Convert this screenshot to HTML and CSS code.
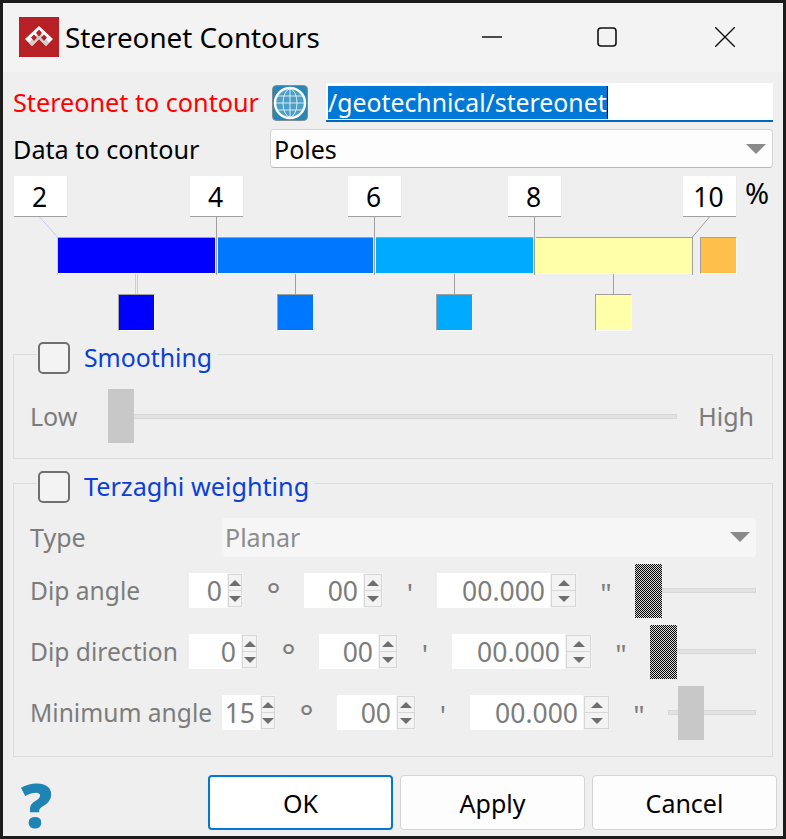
FILE: index.html
```html
<!DOCTYPE html>
<html lang="en">
<head>
    <meta charset="UTF-8">
    <meta name="viewport" content="width=device-width, initial-scale=1.0">
    <title>Stereonet Contours</title>
    <link rel="stylesheet" href="styles.css">
</head>
<body>

    <div class="dialog">
        <div class="titlebar">
            <svg class="app-icon" viewBox="0 0 40 40">
                <rect width="40" height="40" fill="#b72025"/>
                <path d="M20 9 L34 22 L27 29 L20 22 L13 29 L6 22 Z" fill="#fff"/>
                <path d="M10 25.5 L13 29 L20 22 L27 29 L30 25.5 L27 22.5 L20 16 L13 22.5 Z" fill="#cfcfcf"/>
                <path d="M20 12.5 L23 16 L20 19.5 L17 16 Z M15 17.5 L18 20.5 L15 24 L12 20.5 Z M25 17.5 L28 20.5 L25 24 L22 20.5 Z" fill="#b72025"/>
            </svg>
            <div class="title">Stereonet Contours</div>
            <svg class="win-btn win-min" viewBox="0 0 20 20"><path d="M0 10 H20" stroke="#111" stroke-width="1.5"/></svg>
            <svg class="win-btn win-max" viewBox="0 0 20 20"><rect x="1" y="1" width="18" height="18" rx="3" fill="none" stroke="#111" stroke-width="1.6"/></svg>
            <svg class="win-btn win-close" viewBox="0 0 20 20"><path d="M0 0 L20 20 M20 0 L0 20" stroke="#111" stroke-width="1.4"/></svg>
        </div>

        <div class="content">
            <div class="form-row first-row">
                <div class="row-label required">Stereonet to contour</div>
                <svg class="globe" viewBox="0 0 36 36">
                    <rect x="0.5" y="0.5" width="35" height="35" rx="4" fill="#2a86b4" stroke="#7f8c93"/>
                    <circle cx="18" cy="18" r="15" fill="#4d9fc7" stroke="#fff" stroke-width="2.4"/>
                    <g fill="none" stroke="#d6ecf5" stroke-width="1">
                        <ellipse cx="18" cy="18" rx="7" ry="14"/>
                        <path d="M18 4 V32 M4 18 H32 M6 11 H30 M6 25 H30"/>
                    </g>
                </svg>
                <div class="path-input"><span class="selected">/geotechnical/stereonet</span></div>
            </div>

            <div class="form-row second-row">
                <div class="row-label data-label">Data to contour</div>
                <div class="combo">
                    <span>Poles</span>
                    <span class="combo-arrow"></span>
                </div>
            </div>

            <div class="scale">
                <svg class="scale-lines" viewBox="0 0 786 200" width="786" height="200">
                    <g fill="none" stroke="#c8c8ff" stroke-width="1">
                        <path d="M39.5 47 L57.5 67 V105"/>
                        <path d="M135.5 104 V124 M137.5 104 V124"/>
                    </g>
                    <g fill="none" stroke="#a0a0a0" stroke-width="1">
                        <path d="M216.5 47 V105 M374.5 47 V105 M534.5 47 V105"/>
                        <path d="M709.5 47 L692.5 67 V105"/>
                        <path d="M295.5 104 V124 M454.5 104 V124 M613.5 104 V124"/>
                    </g>
                </svg>
                <div class="handles">
                    <div class="handle">2</div>
                    <div class="handle gap-a">4</div>
                    <div class="handle gap-b">6</div>
                    <div class="handle gap-c">8</div>
                    <div class="handle gap-d">10</div>
                    <div class="percent">%</div>
                </div>
                <div class="bar">
                    <div class="seg seg-1"></div>
                    <div class="seg seg-2"></div>
                    <div class="seg seg-3"></div>
                    <div class="seg seg-4"></div>
                    <div class="seg seg-5"></div>
                </div>
                <div class="swatches">
                    <div class="seg swatch sw-1"></div>
                    <div class="seg swatch sw-2"></div>
                    <div class="seg swatch sw-3"></div>
                    <div class="seg swatch sw-4"></div>
                </div>
            </div>

            <div class="group smoothing">
                <div class="group-title">
                    <span class="checkbox"></span>
                    <span class="group-name name-short">Smoothing</span>
                </div>
                <div class="smooth-row">
                    <span class="muted low">Low</span>
                    <div class="slider smooth-slider">
                        <div class="thumb thumb-plain thumb-start"></div>
                    </div>
                    <span class="muted high">High</span>
                </div>
            </div>

            <div class="group terzaghi">
                <div class="group-title">
                    <span class="checkbox"></span>
                    <span class="group-name">Terzaghi weighting</span>
                </div>
                <div class="type-row">
                    <span class="muted type-label">Type</span>
                    <div class="combo combo-off">
                        <span>Planar</span>
                        <span class="combo-arrow"></span>
                    </div>
                </div>

                <div class="angle-row">
                    <span class="muted angle-label">Dip angle</span>
                    <div class="spin spin-deg"><div class="spin-value">0</div><div class="spin-btns"><i class="up"></i><i class="down"></i></div></div>
                    <span class="muted unit unit-deg">°</span>
                    <div class="spin spin-min"><div class="spin-value">00</div><div class="spin-btns"><i class="up"></i><i class="down"></i></div></div>
                    <span class="muted unit unit-min">'</span>
                    <div class="spin spin-sec"><div class="spin-value">00.000</div><div class="spin-btns"><i class="up"></i><i class="down"></i></div></div>
                    <span class="muted unit unit-sec">"</span>
                    <div class="slider angle-slider"><div class="thumb thumb-dither thumb-start"></div></div>
                </div>

                <div class="angle-row">
                    <span class="muted angle-label">Dip direction</span>
                    <div class="spin spin-deg spin-wide"><div class="spin-value">0</div><div class="spin-btns"><i class="up"></i><i class="down"></i></div></div>
                    <span class="muted unit unit-deg">°</span>
                    <div class="spin spin-min"><div class="spin-value">00</div><div class="spin-btns"><i class="up"></i><i class="down"></i></div></div>
                    <span class="muted unit unit-min">'</span>
                    <div class="spin spin-sec"><div class="spin-value">00.000</div><div class="spin-btns"><i class="up"></i><i class="down"></i></div></div>
                    <span class="muted unit unit-sec">"</span>
                    <div class="slider angle-slider"><div class="thumb thumb-dither thumb-start"></div></div>
                </div>

                <div class="angle-row">
                    <span class="muted angle-label label-long">Minimum angle</span>
                    <div class="spin spin-deg"><div class="spin-value">15</div><div class="spin-btns"><i class="up"></i><i class="down"></i></div></div>
                    <span class="muted unit unit-deg">°</span>
                    <div class="spin spin-min"><div class="spin-value">00</div><div class="spin-btns"><i class="up"></i><i class="down"></i></div></div>
                    <span class="muted unit unit-min">'</span>
                    <div class="spin spin-sec"><div class="spin-value">00.000</div><div class="spin-btns"><i class="up"></i><i class="down"></i></div></div>
                    <span class="muted unit unit-sec">"</span>
                    <div class="slider angle-slider"><div class="thumb thumb-plain thumb-mid"></div></div>
                </div>
            </div>

            <div class="footer">
                <div class="help">?</div>
                <button class="btn btn-default" type="button">OK</button>
                <button class="btn" type="button">Apply</button>
                <button class="btn" type="button">Cancel</button>
            </div>
        </div>
    </div>

</body>
</html>
```

FILE: styles.css
```css
* {
    box-sizing: border-box;
}
html, body {
    margin: 0;
    padding: 0;
}
body {
    font-family: "Noto Sans", "Open Sans", sans-serif;
    font-size: 25px;
    color: #000;
    background-color: #efefef;
}
.dialog {
    width: 786px;
    height: 839px;
    border: 3px solid #1c1c1c;
    background-color: #efefef;
    display: flex;
    flex-direction: column;
    overflow: hidden;
}

/* title bar */
.titlebar {
    height: 69px;
    flex: none;
    background-color: #f3f3f3;
    display: flex;
    align-items: center;
    padding-left: 16px;
    padding-bottom: 2px;
}
.app-icon {
    width: 40px;
    height: 40px;
    flex: none;
}
.title {
    margin-left: 6px;
    font-size: 27.8px;
    width: 417px;
    white-space: nowrap;
}
.win-btn {
    width: 20px;
    height: 20px;
    flex: none;
}
.win-max {
    margin-left: 95px;
}
.win-close {
    margin-left: 98px;
}

/* top rows */
.content {
    flex: 1;
    display: flex;
    flex-direction: column;
    padding: 11px 10px 0;
    min-height: 0;
}
.form-row {
    display: flex;
    align-items: center;
}
.first-row {
    height: 39px;
}
.second-row {
    height: 39px;
    margin-top: 7px;
}
.row-label {
    white-space: nowrap;
    font-size: 25.2px;
}
.required {
    color: #ff0000;
    width: 259px;
    margin-bottom: 2px;
}
.data-label {
    width: 257px;
}
.globe {
    width: 36px;
    height: 36px;
    flex: none;
    margin-right: 18px;
}
.path-input {
    flex: 1;
    height: 39px;
    background-color: #fff;
    border-bottom: 2px solid #0067c0;
    padding: 3px 0 0 2px;
    font-size: 24.8px;
    line-height: 33px;
    color: #fff;
}
.selected {
    display: inline-block;
    background-color: #0078d7;
    height: 33px;
    width: 280px;
    white-space: nowrap;
    border-right: 1px solid #000;
}
.combo {
    flex: 1;
    height: 39px;
    background-color: #fdfdfd;
    border: 1px solid #d4d4d4;
    border-bottom-color: #b8b8b8;
    border-radius: 4px;
    display: flex;
    align-items: center;
    justify-content: space-between;
    padding: 0 6px 0 3px;
}
.combo-arrow {
    width: 0;
    height: 0;
    border-left: 10px solid transparent;
    border-right: 10px solid transparent;
    border-top: 10px solid #8a8a8a;
}
.combo-off {
    background-color: #f6f6f6;
    border: none;
    color: #8c8c8c;
    padding-left: 3px;
    padding-right: 6px;
}

/* colour scale */
.scale {
    position: relative;
    margin-top: 8px;
    height: 167px;
}
.scale-lines {
    position: absolute;
    left: -13px;
    top: -6px;
    pointer-events: none;
}
.handles {
    display: flex;
    align-items: flex-start;
    padding-left: 1px;
}
.handle {
    width: 53px;
    height: 41px;
    padding-right: 2px;
    background-color: #fff;
    border-bottom: 1px solid #a0a0a0;
    box-shadow: 1px 0 0 #e8e8e8;
    text-align: center;
    font-size: 26.5px;
    line-height: 43px;
    flex: none;
}
.gap-a {
    margin-left: 123px;
}
.gap-b {
    margin-left: 105px;
}
.gap-c {
    margin-left: 107px;
}
.gap-d {
    margin-left: 122px;
}
.percent {
    margin-left: 9px;
    font-size: 29px;
    line-height: 34px;
}
.bar {
    display: flex;
    margin-top: 20px;
    margin-left: 45px;
    height: 37px;
    position: relative;
}
.seg {
    height: 37px;
    border-top: 1px solid #a0a0a0;
    border-bottom: 1px solid #fff;
    flex: none;
}
.seg-1 {
    width: 157px;
    background-color: #0000ff;
}
.seg-2 {
    width: 155px;
    margin-left: 3px;
    background-color: #0077ff;
}
.seg-3 {
    width: 157px;
    margin-left: 3px;
    background-color: #00aaff;
}
.seg-4 {
    width: 156px;
    margin-left: 3px;
    background-color: #ffffaa;
}
.seg-5 {
    width: 37px;
    margin-left: 8px;
    background-color: #ffbf4a;
    border-left: 1px solid #a0a0a0;
    border-right: 1px solid #fff;
}
.swatches {
    display: flex;
    margin-top: 20px;
    margin-left: 105px;
}
.swatch {
    width: 37px;
    border-left: 1px solid #a0a0a0;
    border-right: 1px solid #fff;
}
.sw-1 {
    background-color: #0000ff;
}
.sw-2 {
    background-color: #0077ff;
    margin-left: 122px;
}
.sw-3 {
    background-color: #00aaff;
    margin-left: 122px;
}
.sw-4 {
    background-color: #ffffaa;
    margin-left: 122px;
}

/* group boxes */
.group {
    border: 1px solid #dcdcdc;
}
.smoothing {
    height: 105px;
    margin-top: 11px;
}
.terzaghi {
    height: 274px;
    margin-top: 24px;
}
.group-title {
    display: inline-flex;
    align-items: center;
    height: 32px;
    margin: -13px 0 0 23px;
    padding: 0 5px 0 1px;
    background-color: #efefef;
    vertical-align: top;
}
.checkbox {
    width: 32px;
    height: 32px;
    background-color: #f3f3f3;
    border: 2px solid #6f6f6f;
    border-radius: 5px;
    flex: none;
}
.group-name {
    margin-left: 14px;
    margin-bottom: 3px;
    color: #0a3fd9;
    white-space: nowrap;
    font-size: 25.2px;
}
.name-short {
    font-size: 24.8px;
}
.muted {
    color: #7c7c7c;
    white-space: nowrap;
}

/* sliders */
.smooth-row {
    display: flex;
    align-items: center;
    height: 54px;
    padding: 0 18px 0 16px;
}
.low {
    width: 78px;
}
.high {
    margin-left: auto;
}
.slider {
    position: relative;
    height: 5px;
    background-color: #e2e2e2;
    border: 1px solid #d8d8d8;
}
.smooth-slider {
    width: 569px;
}
.thumb {
    position: absolute;
    top: 50%;
    width: 27px;
    height: 54px;
    margin-top: -27px;
}
.thumb-start {
    left: -1px;
}
.thumb-mid {
    left: 9px;
}
.thumb-plain {
    background-color: #c8c8c8;
    width: 26px;
}
.thumb-dither {
    background: repeating-conic-gradient(#000 0 25%, #d8d8d8 0 50%) 0 0 / 2px 2px;
}

/* terzaghi rows */
.type-row {
    display: flex;
    align-items: center;
    height: 38px;
    margin-top: 0;
    padding: 0 16px;
}
.type-label {
    width: 192px;
}
.angle-row {
    display: flex;
    align-items: center;
    height: 35px;
    margin-top: 26px;
    padding: 0 16px;
}
.type-row + .angle-row {
    margin-top: 17px;
}
.angle-label {
    width: 159px;
    flex: none;
    font-size: 24.6px;
}
.label-long {
    width: 192px;
}
.spin {
    display: flex;
    height: 35px;
    flex: none;
    font-size: 26.5px;
    color: #7c7c7c;
}
.spin-value {
    flex: 1;
    background-color: #fff;
    text-align: right;
    padding-right: 5px;
    line-height: 37px;
}
.spin-btns {
    width: 16px;
    height: 35px;
    padding: 1px;
    background-color: #f3f3f3;
    display: flex;
    flex-direction: column;
    flex: none;
}
.spin-btns i {
    flex: 1;
    border: 1px solid #d6d6d6;
    display: flex;
    align-items: center;
    justify-content: center;
}
.spin-btns i + i {
    border-top: none;
}
.spin-btns i::after {
    content: "";
    width: 0;
    height: 0;
    border-left: 6px solid transparent;
    border-right: 6px solid transparent;
}
.up::after {
    border-bottom: 6px solid #6e6e6e;
}
.down::after {
    border-top: 6px solid #6e6e6e;
}
.spin-deg {
    width: 54px;
}
.spin-wide {
    width: 69px;
}
.spin-wide .spin-btns {
    width: 17px;
}
.spin-min {
    width: 79px;
}
.spin-min .spin-btns {
    width: 20px;
}
.spin-sec {
    width: 140px;
}
.spin-sec .spin-btns {
    width: 27px;
}
.unit {
    text-align: center;
    flex: none;
    font-size: 28px;
    line-height: 40px;
    height: 35px;
}
.unit-deg {
    width: 61px;
    font-size: 33px;
    line-height: 43px;
}
.unit-min {
    width: 54px;
}
.unit-sec {
    width: 58px;
}
.angle-slider {
    flex: 1;
}

/* footer */
.footer {
    display: flex;
    align-items: flex-start;
    margin-top: 18px;
}
.help {
    width: 195px;
    flex: none;
    padding-left: 8px;
    margin-top: 1px;
    font-family: "Open Sans", sans-serif;
    font-weight: 800;
    font-size: 62px;
    line-height: 56px;
    color: #1f84b4;
}
.btn {
    width: 185px;
    height: 55px;
    flex: none;
    margin-right: 7px;
    background-color: #fdfdfd;
    border: 1px solid #d4d4d4;
    border-radius: 4px;
    font-family: inherit;
    font-size: 25px;
    color: #000;
    padding: 0;
}
.btn-default {
    background-color: #fff;
    border: 2px solid #0078d4;
}
```
